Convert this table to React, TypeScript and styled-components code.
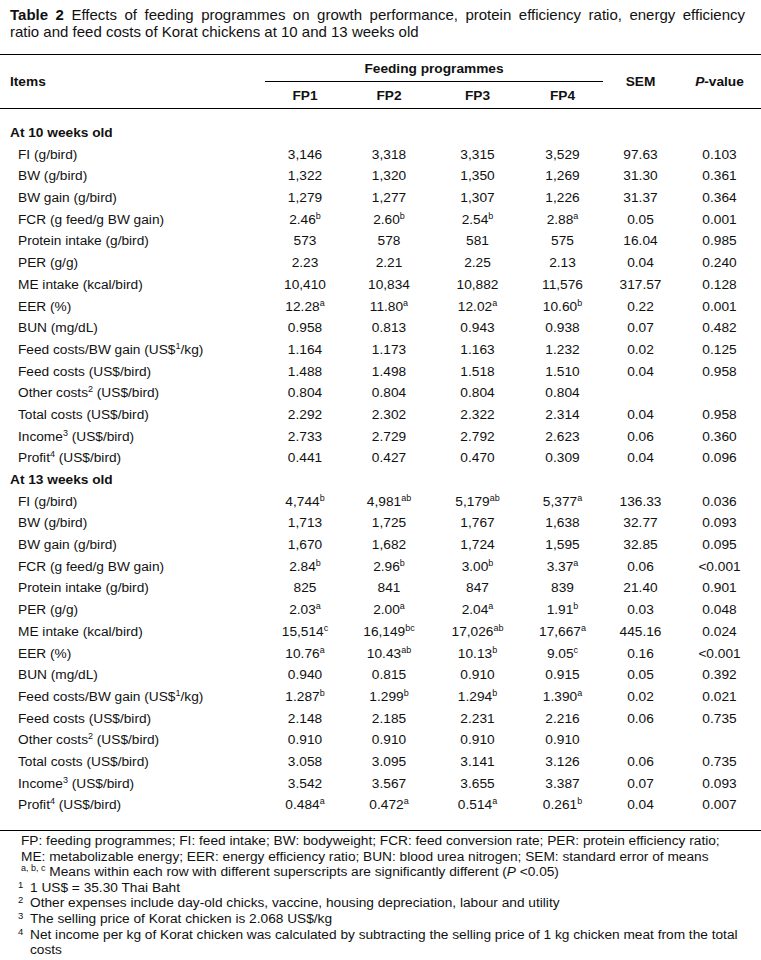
import React from "react";
import styled, { createGlobalStyle } from "styled-components";

const Global = createGlobalStyle`
  html, body { margin: 0; padding: 0; background: #fff; }
  body { font-family: "Liberation Sans", Arial, sans-serif; color: #111; }
`;

const Page = styled.div`
  width: 761px;
  padding-top: 6px;
  font-family: "Liberation Sans", Arial, sans-serif;
`;

const Caption = styled.div`
  padding: 0 16px 0 10px;
  font-size: 15px;
  line-height: 17px;
  margin-bottom: 14px;
`;

const CaptionLine = styled.div<{ $justify?: boolean }>`
  text-align: ${(p) => (p.$justify ? "justify" : "left")};
  text-align-last: ${(p) => (p.$justify ? "justify" : "left")};
  white-space: nowrap;
`;

const Table = styled.table`
  width: 761px;
  border-collapse: collapse;
  table-layout: fixed;
  font-size: 13.7px;
  border-top: 1px solid #000;
  border-bottom: 1px solid #000;
`;

const HeadCell = styled.th<{ $left?: boolean; $rule?: boolean }>`
  height: 26px;
  padding: 0 0 0 ${(p) => (p.$left ? "10px" : "0")};
  text-align: ${(p) => (p.$left ? "left" : "center")};
  font-weight: bold;
  vertical-align: middle;
  border-bottom: ${(p) => (p.$rule ? "1px solid #000" : "none")};
`;

const HeadRow = styled.tr`
  border-bottom: 1px solid #000;
`;

const Cell = styled.td<{ $pad?: "top" | "bottom" }>`
  height: 21.68px;
  line-height: 21.68px;
  padding: ${(p) => (p.$pad === "top" ? "13px 0 0" : p.$pad === "bottom" ? "0 0 14px" : "0")};
  text-align: center;
  white-space: nowrap;
  box-sizing: content-box;
`;

const LabelCell = styled(Cell)<{ $section?: boolean }>`
  text-align: left;
  padding-left: ${(p) => (p.$section ? "10px" : "18px")};
  font-weight: ${(p) => (p.$section ? "bold" : "normal")};
`;

const Sup = styled.sup`
  font-size: 9px;
  line-height: 0;
  vertical-align: 0;
  position: relative;
  top: -5px;
`;

const Notes = styled.div`
  padding: 2px 12px 0 21px;
  font-size: 13.7px;
  line-height: 15.6px;
`;

const Note = styled.div`
  white-space: nowrap;
  height: 15.6px;
`;

const MarkedNote = styled.div`
  display: flex;
  margin-left: -3px;
`;

const Mark = styled.span`
  flex: 0 0 12px;
  font-size: 9.5px;
  line-height: 10px;
`;

const MarkText = styled.div`
  flex: 1;
`;

const renderSup = (s: string) =>
  s.split(/\^([a-z0-9]+)/).map((part, i) =>
    i % 2 === 1 ? <Sup key={i}>{part}</Sup> : <React.Fragment key={i}>{part}</React.Fragment>
  );

type Row = [string, string, string, string, string, string, string];

const week10: Row[] = [
  ["FI (g/bird)", "3,146", "3,318", "3,315", "3,529", "97.63", "0.103"],
  ["BW (g/bird)", "1,322", "1,320", "1,350", "1,269", "31.30", "0.361"],
  ["BW gain (g/bird)", "1,279", "1,277", "1,307", "1,226", "31.37", "0.364"],
  ["FCR (g feed/g BW gain)", "2.46^b", "2.60^b", "2.54^b", "2.88^a", "0.05", "0.001"],
  ["Protein intake (g/bird)", "573", "578", "581", "575", "16.04", "0.985"],
  ["PER (g/g)", "2.23", "2.21", "2.25", "2.13", "0.04", "0.240"],
  ["ME intake (kcal/bird)", "10,410", "10,834", "10,882", "11,576", "317.57", "0.128"],
  ["EER (%)", "12.28^a", "11.80^a", "12.02^a", "10.60^b", "0.22", "0.001"],
  ["BUN (mg/dL)", "0.958", "0.813", "0.943", "0.938", "0.07", "0.482"],
  ["Feed costs/BW gain (US$^1/kg)", "1.164", "1.173", "1.163", "1.232", "0.02", "0.125"],
  ["Feed costs (US$/bird)", "1.488", "1.498", "1.518", "1.510", "0.04", "0.958"],
  ["Other costs^2 (US$/bird)", "0.804", "0.804", "0.804", "0.804", "", ""],
  ["Total costs (US$/bird)", "2.292", "2.302", "2.322", "2.314", "0.04", "0.958"],
  ["Income^3 (US$/bird)", "2.733", "2.729", "2.792", "2.623", "0.06", "0.360"],
  ["Profit^4 (US$/bird)", "0.441", "0.427", "0.470", "0.309", "0.04", "0.096"],
];

const week13: Row[] = [
  ["FI (g/bird)", "4,744^b", "4,981^ab", "5,179^ab", "5,377^a", "136.33", "0.036"],
  ["BW (g/bird)", "1,713", "1,725", "1,767", "1,638", "32.77", "0.093"],
  ["BW gain (g/bird)", "1,670", "1,682", "1,724", "1,595", "32.85", "0.095"],
  ["FCR (g feed/g BW gain)", "2.84^b", "2.96^b", "3.00^b", "3.37^a", "0.06", "<0.001"],
  ["Protein intake (g/bird)", "825", "841", "847", "839", "21.40", "0.901"],
  ["PER (g/g)", "2.03^a", "2.00^a", "2.04^a", "1.91^b", "0.03", "0.048"],
  ["ME intake (kcal/bird)", "15,514^c", "16,149^bc", "17,026^ab", "17,667^a", "445.16", "0.024"],
  ["EER (%)", "10.76^a", "10.43^ab", "10.13^b", "9.05^c", "0.16", "<0.001"],
  ["BUN (mg/dL)", "0.940", "0.815", "0.910", "0.915", "0.05", "0.392"],
  ["Feed costs/BW gain (US$^1/kg)", "1.287^b", "1.299^b", "1.294^b", "1.390^a", "0.02", "0.021"],
  ["Feed costs (US$/bird)", "2.148", "2.185", "2.231", "2.216", "0.06", "0.735"],
  ["Other costs^2 (US$/bird)", "0.910", "0.910", "0.910", "0.910", "", ""],
  ["Total costs (US$/bird)", "3.058", "3.095", "3.141", "3.126", "0.06", "0.735"],
  ["Income^3 (US$/bird)", "3.542", "3.567", "3.655", "3.387", "0.07", "0.093"],
  ["Profit^4 (US$/bird)", "0.484^a", "0.472^a", "0.514^a", "0.261^b", "0.04", "0.007"],
];

const colWidths = [265, 80, 88, 89, 81, 75, 83];

export default function App() {
  const sections: { title: string; rows: Row[] }[] = [
    { title: "At 10 weeks old", rows: week10 },
    { title: "At 13 weeks old", rows: week13 },
  ];
  return (
    <Page>
      <Global />
      <Caption>
        <CaptionLine $justify>
          <b>Table 2</b> Effects of feeding programmes on growth performance, protein efficiency ratio, energy efficiency
        </CaptionLine>
        <CaptionLine>ratio and feed costs of Korat chickens at 10 and 13 weeks old</CaptionLine>
      </Caption>
      <Table>
        <colgroup>
          {colWidths.map((w, i) => (
            <col key={i} style={{ width: w }} />
          ))}
        </colgroup>
        <thead>
          <tr>
            <HeadCell $left rowSpan={2}>Items</HeadCell>
            <HeadCell colSpan={4} $rule>Feeding programmes</HeadCell>
            <HeadCell rowSpan={2}>SEM</HeadCell>
            <HeadCell rowSpan={2}>
              <i>P</i>-value
            </HeadCell>
          </tr>
          <HeadRow>
            <HeadCell>FP1</HeadCell>
            <HeadCell>FP2</HeadCell>
            <HeadCell>FP3</HeadCell>
            <HeadCell>FP4</HeadCell>
          </HeadRow>
        </thead>
        <tbody>
          {sections.map((sec, si) => (
            <React.Fragment key={sec.title}>
              <tr>
                <LabelCell $section $pad={si === 0 ? "top" : undefined} colSpan={7}>
                  {sec.title}
                </LabelCell>
              </tr>
              {sec.rows.map((row, ri) => {
                const pad = si === sections.length - 1 && ri === sec.rows.length - 1 ? "bottom" : undefined;
                return (
                  <tr key={ri}>
                    <LabelCell $pad={pad}>{renderSup(row[0])}</LabelCell>
                    {row.slice(1).map((v, ci) => (
                      <Cell key={ci} $pad={pad}>
                        {renderSup(v)}
                      </Cell>
                    ))}
                  </tr>
                );
              })}
            </React.Fragment>
          ))}
        </tbody>
      </Table>
      <Notes>
        <Note>
          FP: feeding programmes; FI: feed intake; BW: bodyweight; FCR: feed conversion rate; PER: protein efficiency ratio;
        </Note>
        <Note>ME: metabolizable energy; EER: energy efficiency ratio; BUN: blood urea nitrogen; SEM: standard error of means</Note>
        <Note>
          <Sup>a, b, c</Sup> Means within each row with different superscripts are significantly different (<i>P</i> &lt;0.05)
        </Note>
        <MarkedNote>
          <Mark>1</Mark>
          <MarkText>1 US$ = 35.30 Thai Baht</MarkText>
        </MarkedNote>
        <MarkedNote>
          <Mark>2</Mark>
          <MarkText>Other expenses include day-old chicks, vaccine, housing depreciation, labour and utility</MarkText>
        </MarkedNote>
        <MarkedNote>
          <Mark>3</Mark>
          <MarkText>The selling price of Korat chicken is 2.068 US$/kg</MarkText>
        </MarkedNote>
        <MarkedNote>
          <Mark>4</Mark>
          <MarkText>
            Net income per kg of Korat chicken was calculated by subtracting the selling price of 1 kg chicken meat from the total costs
          </MarkText>
        </MarkedNote>
      </Notes>
    </Page>
  );
}
